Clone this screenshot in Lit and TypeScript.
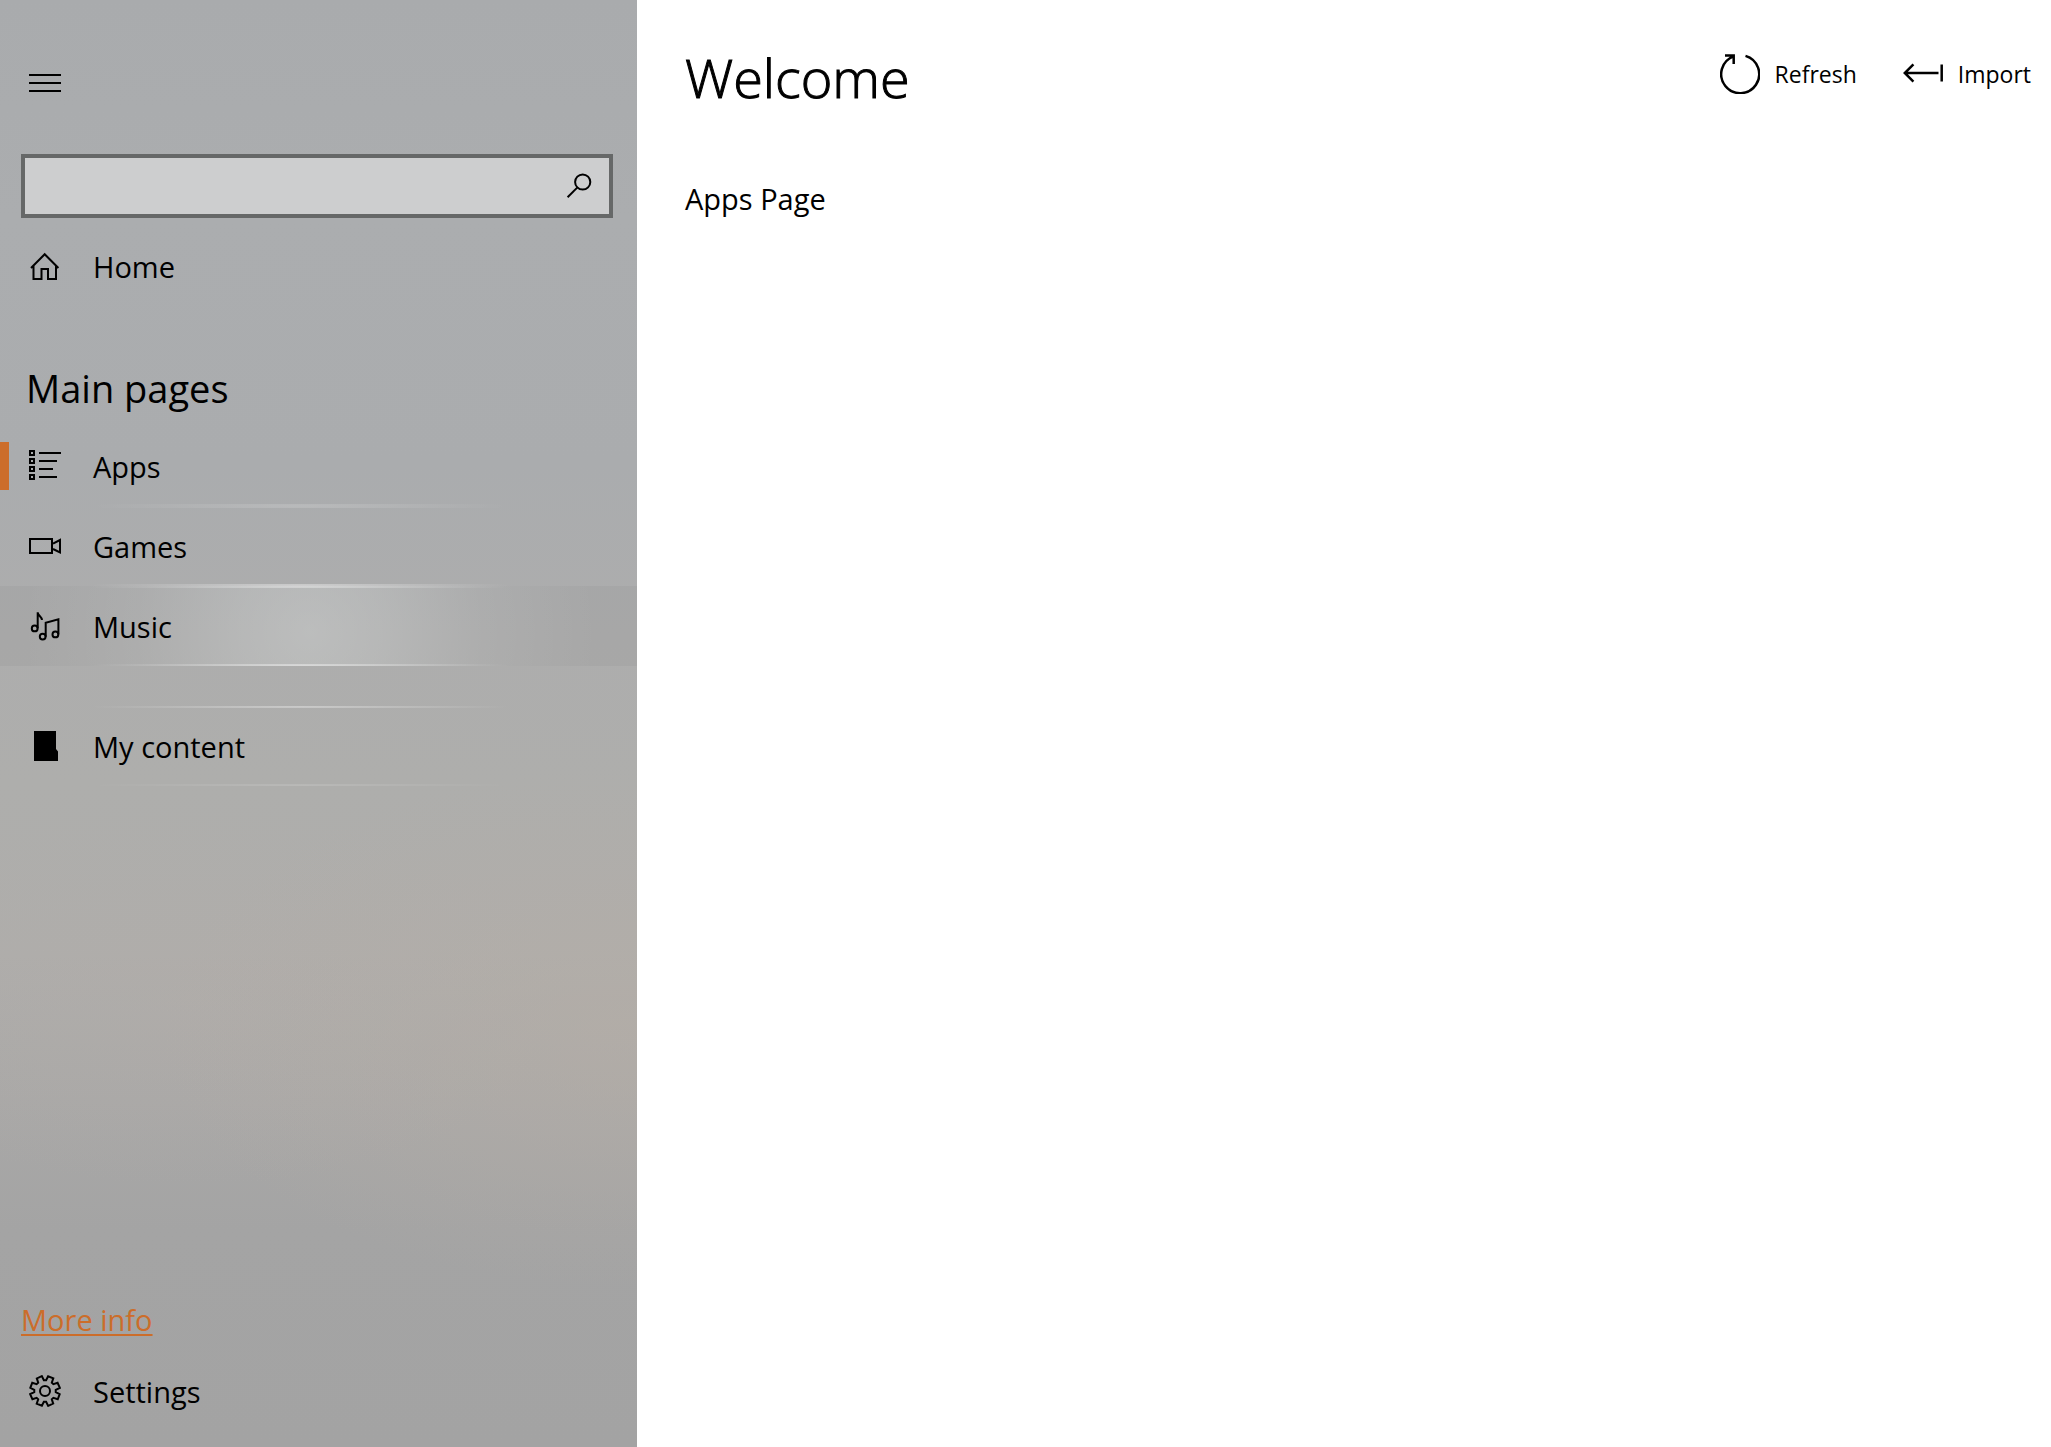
import { LitElement, html, css, svg, nothing } from "lit";
import { customElement, state } from "lit/decorators.js";

/* Eight-toothed gear outline, centred in a 32px box. */
const gearPath = (() => {
  const points: string[] = [];
  const add = (radius: number, degrees: number) => {
    const a = ((degrees - 90) * Math.PI) / 180;
    points.push(`${(16 + radius * Math.cos(a)).toFixed(2)},${(16 + radius * Math.sin(a)).toFixed(2)}`);
  };
  for (let k = 0; k < 8; k++) {
    const base = k * 45;
    add(10.8, base - 6);
    add(10.8, base + 6);
    add(15, base + 12);
    add(15.2, base + 33);
  }
  return `M${points.join("L")}Z`;
})();

const icons = {
  menu: svg`<path d="M0 8h32M0 16h32M0 24h32" />`,
  home: svg`<path d="M2 18 15.7 4.2 29.4 18M4.5 15.5V29H12.5V19H19V29H27V15.5" />`,
  apps: svg`<path d="M1 1h4v4h-4zM1 9h4v4h-4zM1 17h4v4h-4zM1 25h4v4h-4zM10 3h22M10 11h18M10 19h14M10 27h18" />`,
  games: svg`<path d="M1 9h22v14H1zM24 13.6 31 10V22.4L24 19" />`,
  music: svg`<path d="M8.7 18.3V2.3C9 6 12.5 6 13 10M16.7 26.7V12.7L29.4 9.3V24.3" />
    <circle cx="5.7" cy="18.4" r="2.9" /><circle cx="13.7" cy="26.6" r="2.9" /><circle cx="26.4" cy="24.4" r="2.9" />`,
  content: svg`<path class="solid" d="M5 1H27V19L29 21.5V31H5Z" />`,
  settings: svg`<path d=${gearPath} /><circle cx="16" cy="16" r="5" />`,
  search: svg`<circle cx="19.7" cy="12" r="7.6" /><path d="M14.2 17.6 4.6 27.2" />`,
};

type IconName = keyof typeof icons;

interface NavItem {
  label: string;
  icon: IconName;
}

const icon = (name: IconName) =>
  html`<svg class="icon" viewBox="0 0 32 32" aria-hidden="true">${icons[name]}</svg>`;

@customElement("app-root")
export class AppRoot extends LitElement {
  @state() private current = "Apps";

  static styles = css`
    :host {
      display: flex;
      min-height: 100vh;
      background: #fff;
      color: #000;
      font-family: "Open Sans", "Noto Sans", sans-serif;
      font-size: 29px;
      line-height: 40px;
    }
    * {
      box-sizing: border-box;
    }
    button {
      margin: 0;
      border: 0;
      padding: 0;
      background: none;
      color: inherit;
      font: inherit;
      text-align: left;
      cursor: pointer;
    }
    .icon {
      flex: none;
      display: block;
      width: 32px;
      height: 32px;
      fill: none;
      stroke: #000;
      stroke-width: 2;
    }
    .solid {
      fill: #000;
      stroke: none;
    }
    .pane {
      flex: none;
      width: 637px;
      display: flex;
      flex-direction: column;
      padding: 43px 0 16px;
      background:
        radial-gradient(ellipse 75% 18% at 100% 71%, rgba(182, 174, 166, 0.6), transparent),
        radial-gradient(ellipse 60% 13% at 30% 69%, rgba(178, 173, 169, 0.5), transparent),
        linear-gradient(#a9abad 0%, #abadaf 15%, #aaacae 32%, #adadad 44%, #aeaeac 54%, #aeadab 66%, #a9a8a7 76%, #a4a4a4 85%, #a3a3a3 100%);
    }
    .menu {
      padding: 24px 29px;
      width: 90px;
    }
    .search {
      display: flex;
      align-items: center;
      height: 64px;
      margin: 31px 24px 8px 21px;
      border: 4px solid #666868;
      background: #cdcecf;
    }
    .search input {
      flex: 1;
      min-width: 0;
      height: 100%;
      border: 0;
      outline: 0;
      padding: 0 16px;
      background: none;
      font: inherit;
    }
    .search button {
      padding: 8px 14px;
    }
    .list {
      margin: 0;
      padding: 0;
      list-style: none;
    }
    .item {
      position: relative;
      display: flex;
      align-items: center;
      gap: 32px;
      width: 100%;
      height: 80px;
      padding: 0 29px;
    }
    .label {
      padding-top: 2px;
    }
    .item.current::before {
      content: "";
      position: absolute;
      left: 0;
      top: 16px;
      width: 9px;
      height: 48px;
      background: #cc6d2a;
    }
    .heading {
      margin: 40px 0 0;
      padding: 22px 26px 18px;
      font-size: 38px;
      font-weight: 400;
    }
    .item.apps,
    .item.games,
    .item.music,
    .item.content {
      --top: transparent;
      --bottom: transparent;
      --fill: none;
      background:
        radial-gradient(ellipse 210px 9px at 300px 0, var(--top), transparent) top / 100% 2px no-repeat,
        radial-gradient(ellipse 210px 9px at 300px 2px, var(--bottom), transparent) bottom / 100% 2px no-repeat,
        var(--fill);
    }
    .item.apps {
      --bottom: rgba(255, 255, 255, 0.17);
    }
    .item.games {
      --top: rgba(255, 255, 255, 0.17);
      --bottom: rgba(255, 255, 255, 0.42);
    }
    .item.music {
      --top: rgba(255, 255, 255, 0.4);
      --bottom: rgba(255, 255, 255, 0.45);
      --fill:
        radial-gradient(circle 290px at 310px 46px, rgba(250, 255, 253, 0.25), rgba(250, 255, 253, 0.19) 25%, rgba(250, 255, 253, 0.07) 60%, transparent),
        rgba(0, 8, 4, 0.03);
    }
    .item.content {
      --top: rgba(255, 255, 255, 0.36);
      --bottom: rgba(255, 255, 255, 0.14);
    }
    .separated {
      margin-top: 40px;
    }
    .foot {
      margin-top: auto;
    }
    .more {
      display: inline-block;
      margin: 0 21px 11px;
      color: #cc6d2a;
      text-decoration: underline;
      text-decoration-thickness: 2px;
      text-underline-offset: 3px;
    }
    .page {
      flex: 1;
      min-width: 0;
      padding: 41px 20px 41px 48px;
    }
    .top {
      display: flex;
      justify-content: space-between;
      align-items: flex-start;
    }
    .title {
      margin: 0;
      font-size: 54px;
      line-height: 72px;
      font-weight: 300;
      -webkit-text-stroke: 1px #000;
    }
    .commands {
      display: flex;
      gap: 46px;
      padding-top: 13px;
    }
    .command {
      display: flex;
      align-items: center;
      gap: 15px;
      font-size: 23px;
    }
    .command svg {
      width: 40px;
      height: 40px;
      fill: none;
      stroke: #000;
      stroke-width: 2.5;
    }
    .body {
      margin: 66px 0 0;
    }
  `;

  private item({ label, icon: name }: NavItem, extra = "") {
    const active = this.current === label;
    return html`<li class=${extra}>
      <button
        class="item ${name} ${active ? "current" : ""}"
        aria-current=${active ? "page" : nothing}
        @click=${() => (this.current = label)}
      >
        ${icon(name)}<span class="label">${label}</span>
      </button>
    </li>`;
  }

  render() {
    return html`
      <nav class="pane">
        <button class="menu" aria-label="Menu">${icon("menu")}</button>
        <form class="search" role="search" @submit=${(e: Event) => e.preventDefault()}>
          <input type="text" aria-label="Search" />
          <button aria-label="Submit search">${icon("search")}</button>
        </form>
        <ul class="list">
          ${this.item({ label: "Home", icon: "home" })}
        </ul>
        <h2 class="heading">Main pages</h2>
        <ul class="list">
          ${this.item({ label: "Apps", icon: "apps" })}
          ${this.item({ label: "Games", icon: "games" })}
          ${this.item({ label: "Music", icon: "music" })}
          ${this.item({ label: "My content", icon: "content" }, "separated")}
        </ul>
        <div class="foot">
          <a class="more" href="#more">More info</a>
          <ul class="list">
            ${this.item({ label: "Settings", icon: "settings" })}
          </ul>
        </div>
      </nav>
      <main class="page">
        <header class="top">
          <h1 class="title">Welcome</h1>
          <div class="commands">
            <button class="command">
              <svg viewBox="0 0 40 40" aria-hidden="true">
                <path d="M25.5 1.9A19 19 0 1 1 13.4 2.4M5 1.4H13.7V10" />
              </svg>
              Refresh
            </button>
            <button class="command">
              <svg viewBox="0 0 40 40" aria-hidden="true">
                <path d="M35.5 19H2M10.4 10.4 1.8 19 10.4 27.6M38.7 10.5V27.5" />
              </svg>
              Import
            </button>
          </div>
        </header>
        <p class="body">Apps Page</p>
      </main>
    `;
  }
}
